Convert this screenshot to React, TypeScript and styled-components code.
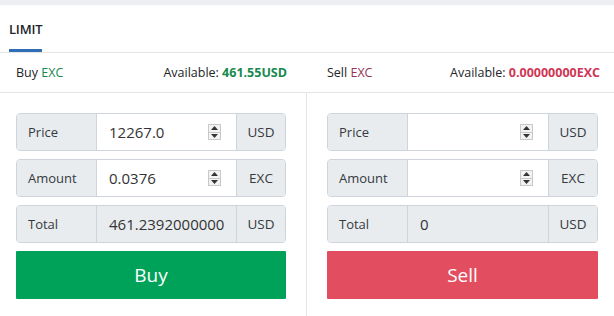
import React from "react";
import styled, { createGlobalStyle } from "styled-components";

const COLORS = {
  GREEN: "#00a25a",
  GREEN_TEXT: "#17894f",
  RED: "#e24e5f",
  RED_TEXT: "#cf3655",
  MAROON: "#973253",
  BORDER: "#ced4da",
  ADDON: "#e9ecef",
  LINE: "#e5e5e5",
  TEXT: "#212529",
  BLUE: "#2f6db5",
};

const GlobalStyle = createGlobalStyle`
  html, body {
    margin: 0;
    padding: 0;
    background: #fff;
    font-family: "Open Sans", "Noto Sans", sans-serif;
    color: ${COLORS.TEXT};
  }
`;

const Page = styled.div`
  width: 614px;
  height: 316px;
  overflow: hidden;
  border-top: 5px solid #eceef4;
  box-sizing: border-box;
`;

const Tabs = styled.div`
  display: flex;
  height: 47px;
  padding-left: 9px;
  border-bottom: 1px solid ${COLORS.LINE};
`;

const Tab = styled.div`
  display: flex;
  align-items: center;
  font-size: 13px;
  font-weight: 600;
  letter-spacing: -0.2px;
  border-bottom: 3px solid ${COLORS.BLUE};
  padding-top: 3px;
`;

const Columns = styled.div`
  display: grid;
  grid-template-columns: 306px minmax(0, 1fr);
`;

const InfoRow = styled.div<{ $side: "buy" | "sell" }>`
  display: flex;
  justify-content: space-between;
  align-items: center;
  height: 39px;
  font-size: 12.5px;
  padding: ${({ $side }) =>
    $side === "buy" ? "0 19px 0 16px" : "0 14px 0 21px"};
  border-bottom: 1px solid ${COLORS.LINE};
`;

const Coin = styled.span<{ $color: string }>`
  color: ${({ $color }) => $color};
`;

const Strong = styled.span<{ $color: string }>`
  color: ${({ $color }) => $color};
  font-weight: 700;
`;

const Form = styled.div<{ $side: "buy" | "sell" }>`
  display: flex;
  flex-direction: column;
  gap: 8px;
  padding: ${({ $side }) =>
    $side === "buy" ? "20px 20px 0 16px" : "20px 16px 0 20px"};
  border-left: ${({ $side }) =>
    $side === "sell" ? `1px solid ${COLORS.LINE}` : "none"};
  height: 240px;
  min-width: 0;
`;

const Group = styled.div`
  display: grid;
  grid-template-columns: 79px minmax(0, 1fr) 49px;
  height: 38px;
  border: 1px solid ${COLORS.BORDER};
  border-radius: 4px;
  box-sizing: border-box;
  overflow: hidden;
`;

const Label = styled.div`
  display: flex;
  align-items: center;
  padding-left: 11px;
  background: ${COLORS.ADDON};
  font-size: 13px;
  color: #343a40;
`;

const Unit = styled.div`
  display: flex;
  align-items: center;
  justify-content: center;
  background: ${COLORS.ADDON};
  border-left: 1px solid ${COLORS.BORDER};
  font-size: 13.5px;
  color: #343a40;
`;

const Field = styled.div<{ $disabled?: boolean }>`
  display: flex;
  align-items: center;
  gap: 6px;
  min-width: 0;
  padding: ${({ $disabled }) => ($disabled ? "0 4px 0 12px" : "0 15px 0 12px")};
  border-left: 1px solid ${COLORS.BORDER};
  background: ${({ $disabled }) => ($disabled ? COLORS.ADDON : "#fff")};
`;

const Input = styled.input`
  flex: 1;
  width: 100%;
  min-width: 0;
  border: none;
  outline: none;
  background: transparent;
  font-family: inherit;
  font-size: 15px;
  color: #333;
  padding: 0;
`;

const Spinner = styled.span`
  display: flex;
  flex-direction: column;
  flex-shrink: 0;
  width: 13px;
  height: 16px;
  border: 1px solid #c8c8c8;
  box-sizing: border-box;
  background: #f3f3f3;
`;

const SpinHalf = styled.span<{ $down?: boolean }>`
  flex: 1;
  display: flex;
  align-items: center;
  justify-content: center;
  border-top: ${({ $down }) => ($down ? "1px solid #c8c8c8" : "none")};
`;

const ActionButton = styled.button<{ $color: string }>`
  height: 48px;
  border: none;
  border-radius: 1px;
  background: ${({ $color }) => $color};
  color: #fff;
  font-family: inherit;
  font-size: 19px;
  cursor: pointer;
`;

const Arrow = ({ down }: { down?: boolean }) => (
  <svg width="7" height="4" viewBox="0 0 7 4">
    <path d={down ? "M0 0h7L3.5 4z" : "M0 4h7L3.5 0z"} fill="#333" />
  </svg>
);

const NumberSpinner = () => (
  <Spinner>
    <SpinHalf>
      <Arrow />
    </SpinHalf>
    <SpinHalf $down>
      <Arrow down />
    </SpinHalf>
  </Spinner>
);

type RowProps = {
  label: string;
  unit: string;
  value: string;
  readOnly?: boolean;
};

const InputRow = ({ label, unit, value, readOnly }: RowProps) => (
  <Group>
    <Label>{label}</Label>
    <Field $disabled={readOnly}>
      <Input defaultValue={value} readOnly={readOnly} />
      {!readOnly && <NumberSpinner />}
    </Field>
    <Unit>{unit}</Unit>
  </Group>
);

const App = () => (
  <Page>
    <GlobalStyle />
    <Tabs>
      <Tab>LIMIT</Tab>
    </Tabs>
    <Columns>
      <InfoRow $side="buy">
        <span>
          Buy <Coin $color={COLORS.GREEN_TEXT}>EXC</Coin>
        </span>
        <span>
          Available: <Strong $color={COLORS.GREEN_TEXT}>461.55USD</Strong>
        </span>
      </InfoRow>
      <InfoRow $side="sell">
        <span>
          Sell <Coin $color={COLORS.MAROON}>EXC</Coin>
        </span>
        <span>
          Available: <Strong $color={COLORS.RED_TEXT}>0.00000000EXC</Strong>
        </span>
      </InfoRow>
      <Form $side="buy">
        <InputRow label="Price" unit="USD" value="12267.0" />
        <InputRow label="Amount" unit="EXC" value="0.0376" />
        <InputRow label="Total" unit="USD" value="461.2392000000" readOnly />
        <ActionButton $color={COLORS.GREEN}>Buy</ActionButton>
      </Form>
      <Form $side="sell">
        <InputRow label="Price" unit="USD" value="" />
        <InputRow label="Amount" unit="EXC" value="" />
        <InputRow label="Total" unit="USD" value="0" readOnly />
        <ActionButton $color={COLORS.RED}>Sell</ActionButton>
      </Form>
    </Columns>
  </Page>
);

export default App;
